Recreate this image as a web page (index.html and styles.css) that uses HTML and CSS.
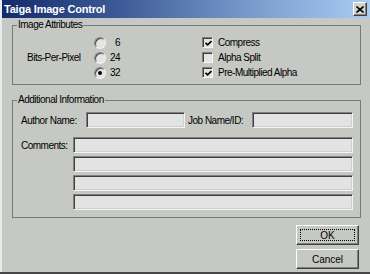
FILE: index.html
```html
<!DOCTYPE html>
<html>
<head>
<meta charset="utf-8">
<link rel="stylesheet" href="styles.css">
</head>
<body>
<div class="window">
  <div class="titlebar">
    <span class="title">Taiga Image Control</span>
    <span class="close"><svg width="8" height="7" viewBox="0 0 8 7"><path d="M0.5 0.5 L7.5 6.5 M7.5 0.5 L0.5 6.5" stroke="#000" stroke-width="1.6" fill="none"/></svg></span>
  </div>
  <div class="client">
    <fieldset class="group g1">
      <legend>Image Attributes</legend>
      <div class="attrs">
        <div class="bpp">Bits-Per-Pixel</div>
        <label class="opt"><span class="radio"></span><span class="num">6</span></label>
        <label class="opt"><span class="check on"><svg width="7" height="7" viewBox="0 0 7 7"><path d="M0.5 2.8 L2.6 4.9 L6.5 1" stroke="#000" stroke-width="1.7" fill="none"/></svg></span><span class="ctext">Compress</span></label>
        <label class="opt"><span class="radio"></span><span class="num">24</span></label>
        <label class="opt"><span class="check"></span><span class="ctext">Alpha Split</span></label>
        <label class="opt"><span class="radio on"></span><span class="num">32</span></label>
        <label class="opt"><span class="check on"><svg width="7" height="7" viewBox="0 0 7 7"><path d="M0.5 2.8 L2.6 4.9 L6.5 1" stroke="#000" stroke-width="1.7" fill="none"/></svg></span><span class="ctext">Pre-Multiplied Alpha</span></label>
      </div>
    </fieldset>
    <fieldset class="group g2">
      <legend>Additional Information</legend>
      <div class="info">
        <div class="row1">
          <span class="lbl-author">Author Name:</span>
          <input class="field f-author" type="text">
          <span class="lbl-job">Job Name/ID:</span>
          <input class="field f-job" type="text">
        </div>
        <div class="comments">
          <span class="lbl-comments">Comments:</span>
          <input class="field" type="text">
          <input class="field" type="text">
          <input class="field" type="text">
          <input class="field" type="text">
        </div>
      </div>
    </fieldset>
    <div class="buttons">
      <button class="btn default">OK</button>
      <button class="btn">Cancel</button>
    </div>
  </div>
</div>
</body>
</html>
```
FILE: styles.css
```css
html, body {
  margin: 0;
  padding: 0;
  background: #c6c8c4;
}
.window {
  width: 370px;
  height: 274px;
  box-sizing: border-box;
  background: #c6c8c4;
  display: flex;
  flex-direction: column;
  font-family: "Liberation Sans", Arial, sans-serif;
  font-size: 10px;
  letter-spacing: -0.5px;
  white-space: nowrap;
  color: #000;
  box-shadow: inset 2px 0 #ebebeb, inset -1px 0 #c6c8c4;
  border-bottom: 2px solid #454545;
  overflow: hidden;
}
.titlebar {
  height: 18px;
  margin-left: 2px;
  padding: 0 3px 0 2px;
  background: linear-gradient(to right, #132a6c 0%, #3a5894 30%, #7c9fd0 70%, #a8ccf2 100%);
  display: flex;
  align-items: center;
  justify-content: space-between;
}
.title {
  color: #fff;
  font-weight: bold;
  font-size: 11px;
  letter-spacing: -0.2px;
  line-height: 14px;
}
.close {
  width: 14px;
  height: 14px;
  box-sizing: border-box;
  background: #d2d2cf;
  border: 1px solid;
  border-color: #fff #404040 #404040 #fff;
  box-shadow: inset -1px -1px #808080;
  display: flex;
  align-items: center;
  justify-content: center;
}
.client {
  flex: 1;
  padding: 1px 9px 0 12px;
  display: flex;
  flex-direction: column;
}
.group {
  margin: 0;
  padding: 0;
  border: 1px solid #7a7a7a;
  min-width: 0;
}
.group legend {
  margin-left: 4px;
  padding: 0 1px;
  line-height: 12px;
}
.attrs {
  display: grid;
  grid-template-columns: 67px 108px 1fr;
  grid-template-rows: repeat(3, 15px);
  padding: 4px 0 4px 14px;
}
.bpp {
  grid-row: 1 / 4;
  align-self: center;
}
.opt {
  display: flex;
  align-items: center;
}
.radio {
  width: 12px;
  height: 12px;
  box-sizing: border-box;
  border-radius: 50%;
  background: #e4e4e4;
  border: 1px solid;
  border-color: #888 #f2f2f2 #f2f2f2 #888;
  box-shadow: inset 1px 1px 0 #4a4a4a;
  display: flex;
  align-items: center;
  justify-content: center;
}
.radio.on::after {
  content: "";
  width: 4px;
  height: 4px;
  border-radius: 50%;
  background: #000;
}
.num {
  width: 12px;
  margin-left: 2px;
  text-align: right;
}
.check {
  width: 11px;
  height: 11px;
  box-sizing: border-box;
  background: #e4e4e4;
  border: 1px solid;
  border-color: #808080 #f4f4f4 #f4f4f4 #808080;
  box-shadow: inset 1px 1px 0 #404040;
  display: flex;
  align-items: center;
  justify-content: center;
  padding: 1px 0 0 1px;
}
.ctext {
  margin-left: 5px;
}
.g2 {
  margin-top: 9px;
}
.info {
  padding: 6px 7px 7px 8px;
  display: flex;
  flex-direction: column;
  gap: 9px;
}
.row1 {
  display: flex;
  align-items: center;
}
.lbl-author {
  width: 65px;
}
.lbl-job {
  width: 64px;
  margin-left: 3px;
}
.field {
  appearance: none;
  -webkit-appearance: none;
  margin: 0;
  padding: 0;
  height: 16px;
  box-sizing: border-box;
  background: #e3e3e3;
  border: 1px solid;
  border-color: #808080 #f4f4f4 #f4f4f4 #808080;
  box-shadow: inset 1px 1px 0 #404040, inset -1px -1px 0 #cfcfcf;
  font: inherit;
  min-width: 0;
}
.f-author {
  width: 99px;
}
.f-job {
  flex: 1;
}
.comments {
  display: grid;
  grid-template-columns: 52px 1fr;
  row-gap: 3px;
}
.comments .field {
  grid-column: 2;
}
.lbl-comments {
  grid-column: 1;
  grid-row: 1;
  align-self: center;
}
.buttons {
  margin-top: 7px;
  margin-right: 2px;
  display: flex;
  flex-direction: column;
  align-items: flex-end;
  gap: 4px;
}
.btn {
  width: 63px;
  height: 20px;
  box-sizing: border-box;
  margin: 0;
  padding: 0;
  background: #c6c8c4;
  border: 1px solid;
  border-color: #fff #404040 #404040 #fff;
  box-shadow: inset -1px -1px 0 #808080;
  font: inherit;
  color: #000;
}
.btn.default {
  outline: 1px dotted #000;
  outline-offset: -5px;
}
```
